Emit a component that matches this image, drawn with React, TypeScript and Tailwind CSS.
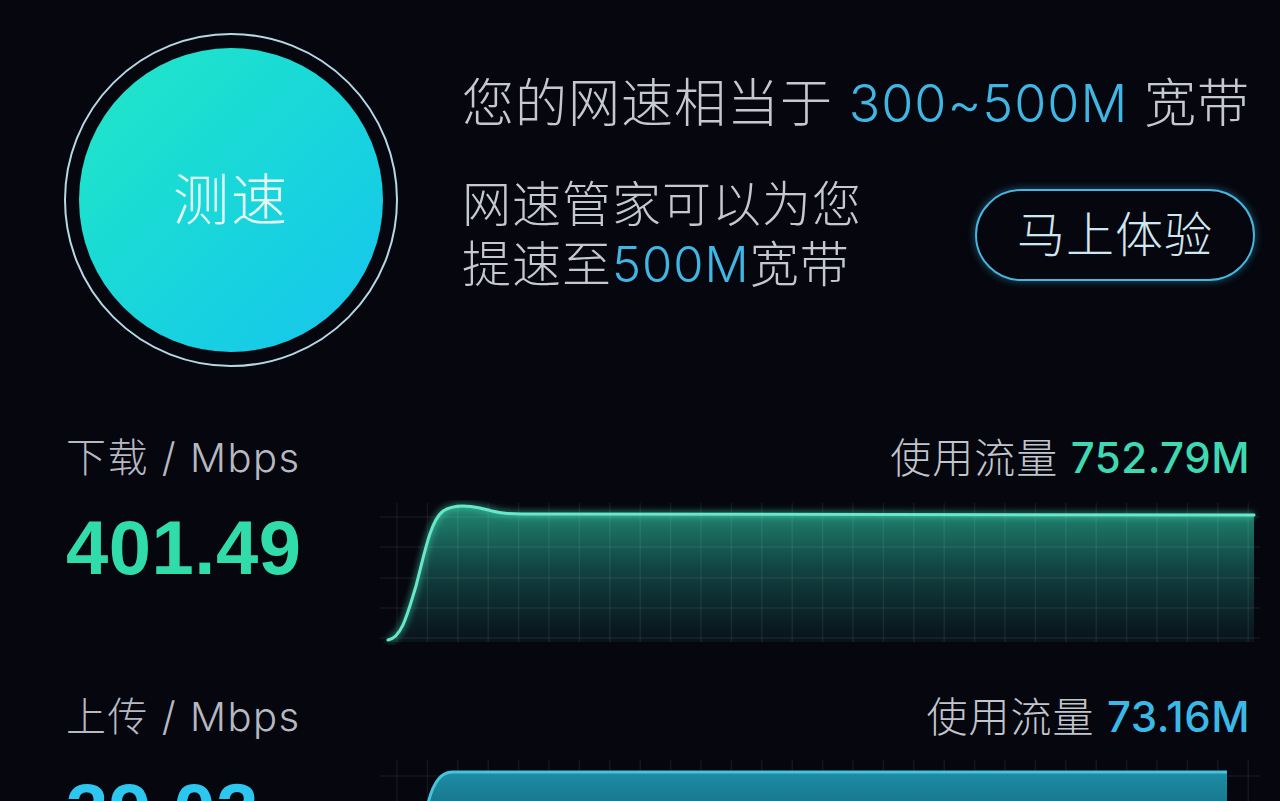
import React from 'react'

const FONT = "font-['Inter','Noto_Sans_CJK_SC',sans-serif]"
const NUM = "font-['Liberation_Sans','Noto_Sans_CJK_SC',sans-serif]"

// vertical grid lines every ~30px across the chart
const gridX = Array.from({ length: 29 }, (_, i) => 17 + i * 30.4)
const gridY = [17, 47, 78, 108, 138]

const Grid = ({ top }: { top: number }) => (
  <g stroke="#ffffff" strokeOpacity="0.065" strokeWidth="1.5">
    {gridX.map((x) => (
      <line key={'v' + x} x1={x} y1={top} x2={x} y2={142} />
    ))}
    {gridY.map((y) => (
      <line key={'h' + y} x1={0} y1={y} x2={880} y2={y} />
    ))}
  </g>
)

const dlLine =
  'M8,140 C22,138 28,112 36,86 C44,56 50,22 62,12 C72,4 86,5 100,8 C116,12 122,14 142,14 L874,15'

const DownloadChart = () => (
  <svg width="880" height="145" viewBox="0 0 880 145" className="shrink-0">
    <defs>
      <linearGradient id="dlFill" x1="0" y1="0" x2="0" y2="1">
        <stop offset="0" stopColor="#228f78" stopOpacity="0.95" />
        <stop offset="0.45" stopColor="#134c4a" stopOpacity="0.9" />
        <stop offset="1" stopColor="#0a1820" stopOpacity="0.7" />
      </linearGradient>
      <filter id="dlGlow" x="-10%" y="-50%" width="120%" height="200%">
        <feGaussianBlur stdDeviation="3" />
      </filter>
    </defs>
    <path d={dlLine + ' L874,142 L8,142 Z'} fill="url(#dlFill)" />
    <Grid top={3} />
    <path d={dlLine} fill="none" stroke="#3fd9b4" strokeOpacity="0.5" strokeWidth="6" filter="url(#dlGlow)" />
    <path d={dlLine} fill="none" stroke="#66e8c9" strokeWidth="3" strokeLinecap="round" />
  </svg>
)

const UploadChart = () => (
  <svg width="880" height="145" viewBox="0 0 880 145" className="shrink-0">
    <defs>
      <linearGradient id="ulFill" x1="0" y1="0" x2="0" y2="1">
        <stop offset="0" stopColor="#1d8ea6" />
        <stop offset="0.4" stopColor="#15687e" />
        <stop offset="1" stopColor="#0c3444" />
      </linearGradient>
    </defs>
    <Grid top={1} />
    <path d="M40,145 C41,70 46,13 72,13 L847,13 L847,145 Z" fill="url(#ulFill)" />
    <path d="M40,145 C41,70 46,13 72,13 L847,13" fill="none" stroke="#45c4dc" strokeWidth="3" />
  </svg>
)

type StatProps = {
  label: string
  usage: string
  usageColor: string
  value: string
  valueColor: string
  valuePad: string
  chart: React.ReactNode
}

const Stat = ({ label, usage, usageColor, value, valueColor, valuePad, chart }: StatProps) => (
  <section className="h-[259px] pl-[66px] pr-[30px]">
    <div className="flex h-[48px] items-center justify-between">
      <p className="text-[40px] font-light leading-[48px] tracking-[1.5px] text-[#b6b9c1]">{label}</p>
      <p className="text-[41px] font-light leading-[48px] tracking-[1px] text-[#c2c5cc]">
        使用流量 <span className={`text-[42px] font-medium tracking-[0.5px] ${usageColor}`}>{usage}</span>
      </p>
    </div>
    <div className="mt-[18px] flex">
      <div className={`w-[314px] shrink-0 ${valuePad}`}>
        <p className={`${NUM} text-[76px] font-bold leading-none tracking-[0.5px] ${valueColor}`}>{value}</p>
      </div>
      {chart}
    </div>
  </section>
)

const App = () => {
  return (
    <div className={`h-[801px] w-[1280px] overflow-hidden bg-[#05060e] ${FONT}`}>
      <div className="flex pl-[64px] pt-[33px]">
        <div className="flex h-[334px] w-[334px] shrink-0 items-center justify-center rounded-full border-2 border-[#b4d8e4]">
          <div className="flex h-[304px] w-[304px] items-center justify-center rounded-full bg-linear-to-br from-[#22e8c4] to-[#18c4ee]">
            <p className="text-[56px] font-light tracking-[2px] text-[#e8f8f6]">测速</p>
          </div>
        </div>
        <div className="ml-[64px] flex w-[793px] flex-col pt-[41px]">
          <p className="whitespace-nowrap text-[52px] font-light leading-[60px] tracking-[1px] text-[#c6c8d0]">
            您的网速相当于 <span className="text-[#3fb6e4]">300~500M</span> 宽带
          </p>
          <div className="mt-[41px] flex items-center justify-between">
            <p className="text-[49px] font-light leading-[60px] tracking-[1px] text-[#c6c8d0]">
              网速管家可以为您
              <br />
              提速至<span className="text-[#3fb6e4]">500M</span>宽带
            </p>
            <button className="flex h-[92px] w-[280px] items-center justify-center rounded-full border-2 border-[#46b6e0] shadow-[0_0_8px_rgba(70,182,224,0.45)]">
              <span className="text-[48px] font-light tracking-[1px] text-[#cfe7f0]">马上体验</span>
            </button>
          </div>
        </div>
      </div>

      <div className="mt-[67px]">
        <Stat
          label="下载 / Mbps"
          usage="752.79M"
          usageColor="text-[#3ed9b2]"
          value="401.49"
          valueColor="text-[#31dcac]"
          valuePad="pt-[10px]"
          chart={<DownloadChart />}
        />
        <Stat
          label="上传 / Mbps"
          usage="73.16M"
          usageColor="text-[#3ab8e6]"
          value="39.02"
          valueColor="text-[#2cc6ee]"
          valuePad="pt-[14px]"
          chart={<UploadChart />}
        />
      </div>
    </div>
  )
}

export default App
